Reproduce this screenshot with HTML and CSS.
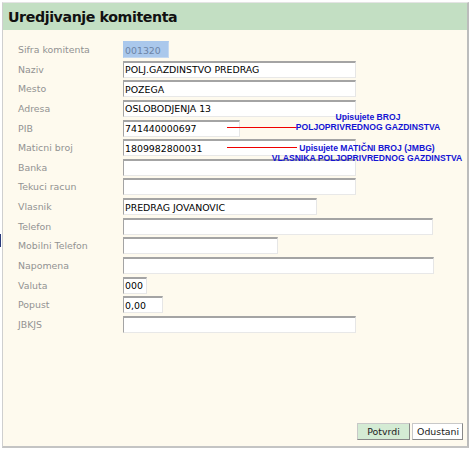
FILE: index.html
```html
<!DOCTYPE html>
<html>
<head>
<meta charset="utf-8">
<link rel="stylesheet" href="styles.css">
</head>
<body>
<div class="page">
  <div class="panel">
    <div class="header"><h1 class="title">Uredjivanje komitenta</h1></div>
    <div class="content">
      <div class="form">
        <label class="lbl">Sifra komitenta</label>
        <div class="cell"><input class="inp inp-code" style="width:46px" value="001320" readonly></div>
        <label class="lbl">Naziv</label>
        <div class="cell"><input class="inp" style="width:233px" value="POLJ.GAZDINSTVO PREDRAG"></div>
        <label class="lbl">Mesto</label>
        <div class="cell"><input class="inp" style="width:233px" value="POZEGA"></div>
        <label class="lbl">Adresa</label>
        <div class="cell"><input class="inp" style="width:233px" value="OSLOBODJENJA 13"></div>
        <label class="lbl">PIB</label>
        <div class="cell"><input class="inp" style="width:117px" value="741440000697"></div>
        <label class="lbl">Maticni broj</label>
        <div class="cell"><input class="inp" style="width:233px" value="1809982800031"></div>
        <label class="lbl">Banka</label>
        <div class="cell"><input class="inp" style="width:233px" value=""></div>
        <label class="lbl">Tekuci racun</label>
        <div class="cell"><input class="inp" style="width:233px" value=""></div>
        <label class="lbl">Vlasnik</label>
        <div class="cell"><input class="inp" style="width:194px" value="PREDRAG JOVANOVIC"></div>
        <label class="lbl">Telefon</label>
        <div class="cell"><input class="inp" style="width:310px" value=""></div>
        <label class="lbl">Mobilni Telefon</label>
        <div class="cell"><input class="inp" style="width:155px" value=""></div>
        <label class="lbl">Napomena</label>
        <div class="cell"><input class="inp" style="width:311px" value=""></div>
        <label class="lbl">Valuta</label>
        <div class="cell"><input class="inp" style="width:24px" value="000"></div>
        <label class="lbl">Popust</label>
        <div class="cell"><input class="inp" style="width:40px" value="0,00"></div>
        <label class="lbl">JBKJS</label>
        <div class="cell"><input class="inp" style="width:233px" value=""></div>
      </div>
    </div>
    <div class="footer">
      <button class="btn btn-ok">Potvrdi</button>
      <button class="btn btn-cancel">Odustani</button>
    </div>
  </div>

  <div class="note-line note-line-1"></div>
  <div class="note note-1">Upisujete BROJ<br>POLJOPRIVREDNOG GAZDINSTVA</div>
  <div class="note-line note-line-2"></div>
  <div class="note note-2">Upisujete MATIČNI BROJ (JMBG)<br>VLASNIKA POLJOPRIVREDNOG GAZDINSTVA</div>
  <div class="edge-mark"></div>
</div>
</body>
</html>
```

FILE: styles.css
```css
html, body {
  margin: 0;
  padding: 0;
  background: #ffffff;
}
.page {
  position: relative;
  width: 473px;
  height: 450px;
  padding: 2px 0 0 2px;
  box-sizing: border-box;
  font-family: "DejaVu Sans", Verdana, sans-serif;
}
.panel {
  width: 467px;
  height: 446px;
  box-sizing: border-box;
  background: #fefaee;
  border-left: 1px solid #cfcfcf;
  border-right: 2px solid #bcbcbc;
  border-bottom: 2px solid #c4c4c4;
  border-top: 1px solid #e4e4e4;
  display: flex;
  flex-direction: column;
}
.header {
  height: 27px;
  background: #c3dfc3;
  padding-left: 5px;
  display: flex;
  align-items: center;
}
.title {
  margin: 0;
  font-size: 14.2px;
  font-weight: bold;
  color: #111;
  letter-spacing: -0.4px;
}
.content {
  padding: 11px 0 0 15px;
}
.form {
  display: grid;
  grid-template-columns: 105px 1fr;
  grid-auto-rows: 17px;
  row-gap: 2.64px;
}
.lbl {
  font-size: 9.4px;
  color: #929292;
  display: flex;
  align-items: center;
}
.cell {
  display: flex;
  align-items: center;
}
.inp {
  box-sizing: border-box;
  height: 17px;
  margin: 0;
  padding: 0 1px;
  font-family: "DejaVu Sans", Verdana, sans-serif;
  font-size: 9.4px;
  color: #000;
  background: #ffffff;
  border-style: solid;
  border-width: 2px 1px 1px 1px;
  border-color: #a4a4a4 #e6e6e6 #e8e8e8 #a4a4a4;
  outline: none;
}
.inp-code {
  background: #aac8ec;
  color: #6c84a6;
  border-color: #aac8ec #c4d8f0 #c4d8f0 #aac8ec;
}
.footer {
  margin-top: auto;
  display: flex;
  justify-content: flex-end;
  gap: 2px;
  padding: 0 4px 6px 0;
}
.btn {
  box-sizing: border-box;
  height: 17px;
  margin: 0;
  padding: 0 4px;
  font-family: "DejaVu Sans", Verdana, sans-serif;
  font-size: 9.4px;
  color: #1a1a1a;
  background: #ffffff;
  border: 1px solid;
  border-color: #c8c8c8 #888888 #888888 #c8c8c8;
}
.btn-ok {
  width: 53px;
  background: #d4ebd4;
}
.btn-cancel {
  width: 51px;
}
.note {
  position: absolute;
  width: 220px;
  text-align: center;
  font-family: "Liberation Sans", Arial, sans-serif;
  font-weight: bold;
  font-size: 8.6px;
  line-height: 10.8px;
  color: #1414d4;
}
.note-1 {
  left: 258px;
  top: 111.5px;
}
.note-2 {
  left: 257px;
  top: 142.5px;
}
.note-line {
  position: absolute;
  height: 1px;
  background: #f00000;
}
.note-line-1 {
  left: 227px;
  width: 71px;
  top: 127px;
}
.note-line-2 {
  left: 227px;
  width: 70px;
  top: 147px;
}
.edge-mark {
  position: absolute;
  left: 0;
  top: 234px;
  width: 1px;
  height: 13px;
  background: #2a3a7a;
}
```
